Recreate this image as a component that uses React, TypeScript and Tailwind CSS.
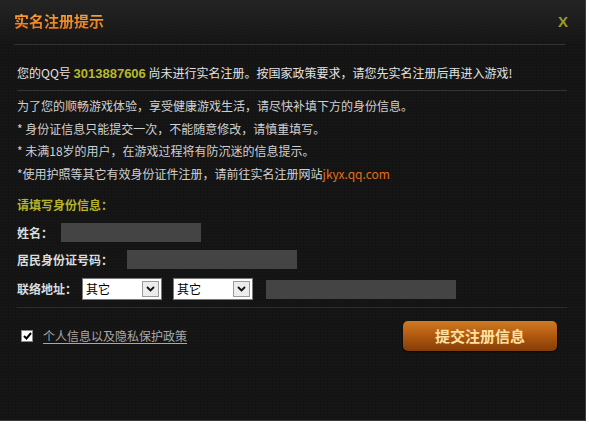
import React from "react";

const font = { fontFamily: '"Noto Sans CJK SC", "Liberation Sans", sans-serif' };

function FakeSelect({ value }: { value: string }) {
  return (
    <div className="flex h-[22px] w-[80px] items-stretch border border-[#7a7a7a] bg-white">
      <span className="flex flex-1 items-center pl-[3px] text-[12px] leading-none text-black">{value}</span>
      <span className="m-[2px] flex w-[17px] items-center justify-center border border-[#9a9a9a] bg-[#ececec]">
        <svg width="9" height="6" viewBox="0 0 9 6">
          <path d="M1 1 L4.5 4.5 L8 1" fill="none" stroke="#111" strokeWidth="1.8" />
        </svg>
      </span>
    </div>
  );
}

export default function App() {
  return (
    <div className="h-[424px] w-[589px] bg-white" style={font}>
      <div className="flex h-[421px] w-[586px] flex-col border-r border-b border-[#3c3c3c] bg-[#141414] bg-[radial-gradient(#1b1b1b_1px,transparent_1px)] bg-[length:3px_3px]">
        {/* header */}
        <div className="bg-gradient-to-b from-[#242424] to-transparent px-[14px] pt-[9px]">
          <div className="flex items-center justify-between">
            <h1 className="bg-gradient-to-b from-[#ffb040] to-[#e06a10] bg-clip-text text-[15px] font-bold leading-[24px] text-transparent">
              实名注册提示
            </h1>
            <span className="mr-[3px] text-[15px] font-bold leading-none text-[#9b9b2c]" style={{ fontFamily: '"Liberation Sans", sans-serif' }}>
              X
            </span>
          </div>
          <div className="mt-[11px] h-px w-[551px] bg-[#333]" />
        </div>

        <div className="px-[17px] text-[12px] text-[#dcdcdc]">
          <p className="mt-[19px] leading-[18px] text-[#e2e2e2]">
            您的QQ号{" "}
            <b className="text-[13px] text-[#b7b82c]" style={{ fontFamily: '"Liberation Sans", sans-serif' }}>
              3013887606
            </b>{" "}
            尚未进行实名注册。按国家政策要求，请您先实名注册后再进入游戏!
          </p>
          <div className="mt-[7px] h-px w-[550px] bg-[#333]" />

          <div className="mt-[4px] flex flex-col leading-[22.5px] text-[#d0d0d0]">
            <p>为了您的顺畅游戏体验，享受健康游戏生活，请尽快补填下方的身份信息。</p>
            <p>* 身份证信息只能提交一次，不能随意修改，请慎重填写。</p>
            <p>* 未满18岁的用户，在游戏过程将有防沉迷的信息提示。</p>
            <p>
              *使用护照等其它有效身份证件注册，请前往实名注册网站
              <span className="text-[#e06f17]">jkyx.qq.com</span>
            </p>
          </div>

          <p className="mt-[11px] font-bold leading-[18px] text-[#b3b42a]">请填写身份信息：</p>

          <div className="mt-[9px] flex items-center font-bold">
            <span>姓名：</span>
            <div className="ml-[8px] h-[19px] w-[140px] bg-[#444]" />
          </div>
          <div className="mt-[8px] flex items-center font-bold">
            <span>居民身份证号码：</span>
            <div className="ml-[14px] h-[19px] w-[170px] bg-[#444]" />
          </div>
          <div className="mt-[9px] flex items-center font-bold">
            <span>联络地址：</span>
            <div className="ml-[5px] flex items-center gap-[11px] font-normal">
              <FakeSelect value="其它" />
              <FakeSelect value="其它" />
            </div>
            <div className="ml-[13px] h-[19px] w-[190px] bg-[#444]" />
          </div>
          <div className="mt-[7px] h-px w-[550px] bg-[#2c2c2c]" />

          <div className="mt-[13px] flex items-center justify-between">
            <label className="ml-[4px] flex items-center gap-[10px]">
              <span className="flex h-[12px] w-[12px] items-center justify-center border border-[#888] bg-white">
                <svg width="9" height="8" viewBox="0 0 9 8">
                  <path d="M1 4 L3.5 6.5 L8 1" fill="none" stroke="#000" strokeWidth="2" />
                </svg>
              </span>
              <span className="text-[#a8a8a8] underline underline-offset-2">个人信息以及隐私保护政策</span>
            </label>
            <button className="mr-[11px] flex h-[30px] w-[154px] items-center justify-center rounded-[5px] bg-gradient-to-b from-[#d07a22] via-[#b0580f] to-[#843d08] text-[15px] font-bold text-[#ffe0a0] shadow-[0_1px_2px_rgba(0,0,0,0.8)]">
              提交注册信息
            </button>
          </div>
        </div>
      </div>
    </div>
  );
}
